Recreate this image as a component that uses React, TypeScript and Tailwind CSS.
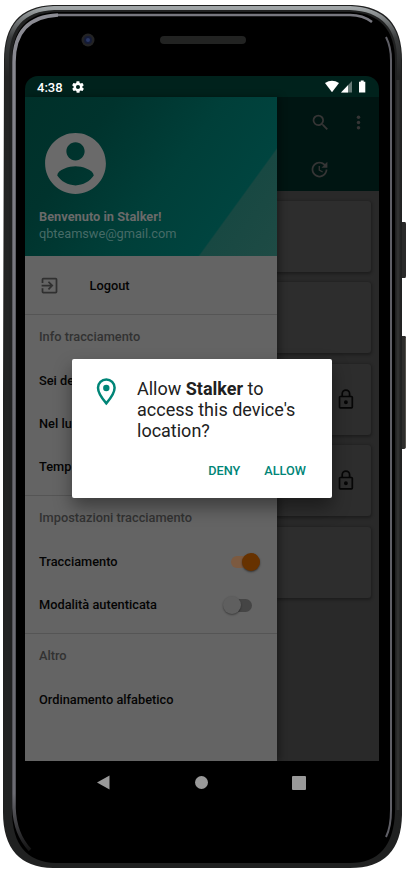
import React from 'react';

function PhoneBody() {
  return (
    <svg className="absolute inset-0" width="409" height="874" viewBox="0 0 409 874" fill="none">
      <defs>
        <linearGradient id="rim" x1="0" y1="0" x2="0" y2="1">
          <stop offset="0" stopColor="#a0a5a7" />
          <stop offset="0.035" stopColor="#3a3c3d" />
          <stop offset="0.08" stopColor="#232424" />
          <stop offset="1" stopColor="#202121" />
        </linearGradient>
        <linearGradient id="edge" gradientUnits="userSpaceOnUse" x1="0" y1="14" x2="0" y2="852">
          <stop offset="0" stopColor="#8c8c94" />
          <stop offset="0.5" stopColor="#6c6c73" />
          <stop offset="0.93" stopColor="#6c6c73" />
          <stop offset="1" stopColor="#111" />
        </linearGradient>
      </defs>
      <path d="M401 222h4q1 0 1 2v52q0 2-1 2h-4z" fill="#2a2a2a" />
      <path d="M401 336h4q1 0 1 2v108q0 3-2 3h-3z" fill="#2e2d2c" />
      <path d="M405.500 338v109" stroke="#55534e" />
      <path d="M53 5H352Q402 7 402 60V815Q401 868 350 868H53Q3 867 3 812V400L4 60Q4 7 53 5Z" fill="#202121" />
      <path d="M54 8H350Q399 10 399 60V814Q397 865 350 865H54Q7 864 7 812V60Q7 10 54 8Z" stroke="url(#rim)" strokeWidth="4" />
      <path d="M56 12H350Q395 14 395 61V812Q393 863 350 863H56Q12 862 12 810V61Q12 14 56 12Z" fill="#000" />
      <path d="M58 15H350Q363 15 372 22" stroke="#77777f" strokeWidth="2.500" />
      <path d="M58 15Q14 17 14 62V808Q15 834 30 850" stroke="url(#edge)" strokeWidth="3.500" />
      <path d="M16.500 62V808Q18 834 34 850L80 840V20H58Q16.500 20 16.500 62Z" fill="#000" />
      <path d="M386 37Q391 47 391 60V810Q391 827 386 837" stroke="#5f5f66" strokeWidth="2" />
      <path d="M398 80V810" stroke="#303131" strokeWidth="3" />
      <circle cx="88" cy="40" r="6.500" fill="#232324" />
      <circle cx="88" cy="40" r="4" fill="#151b35" />
      <circle cx="88" cy="40" r="2" fill="#293765" />
      <rect x="160" y="36" width="86" height="8" rx="4" fill="#222322" />
    </svg>
  );
}

function StatusBar() {
  return (
    <div className="flex h-[21px] items-center bg-[#00221c] pl-3 pr-[13px] text-white">
      <span className="pt-px text-[13px] font-medium leading-none tracking-[0]">4:38</span>
      <svg className="ml-[8px]" width="14" height="14" viewBox="0 0 24 24" fill="currentColor">
        <path d="M19.400 13c0-.3.100-.7.100-1s0-.7-.1-1l2.100-1.700c.2-.1.300-.4.100-.6l-2-3.500c-.1-.2-.4-.3-.6-.2l-2.500 1a7 7 0 0 0-1.700-1l-.4-2.600c0-.2-.2-.4-.5-.4h-4c-.2 0-.5.200-.5.400L9 5a7 7 0 0 0-1.700 1l-2.500-1c-.2-.1-.5 0-.6.200l-2 3.500c-.1.200-.1.500.1.600L4.600 11a8 8 0 0 0 0 2l-2.100 1.700c-.2.100-.3.400-.1.600l2 3.500c.1.200.4.300.6.200l2.500-1c.5.400 1.100.7 1.700 1l.4 2.600c0 .2.200.4.500.4h4c.2 0 .5-.2.500-.4L15 19a7 7 0 0 0 1.700-1l2.500 1c.2.100.5 0 .6-.2l2-3.500c.1-.2.1-.5-.1-.6zM12 15.500a3.500 3.500 0 1 1 0-7 3.500 3.500 0 0 1 0 7z" />
      </svg>
      <svg className="ml-auto" width="41" height="13" viewBox="0 0 41 13" fill="currentColor">
        <path d="M0 3Q7-1.500 14 3L7 12.300Z" />
        <path d="M16 12.500L27 1V12.500Z" opacity=".4" />
        <path d="M16 12.500L23 5.200V12.500Z" />
        <path d="M34 1.800h1.700V.5h3v1.300h1.600v10.700H34z" />
      </svg>
    </div>
  );
}

function Lock() {
  return (
    <svg width="16" height="21" viewBox="0 0 16 21" fill="none" stroke="#060606" strokeWidth="1.700">
      <rect x="1.500" y="7.500" width="12.800" height="11.400" rx="0.800" />
      <path d="M4.200 7.500V4.800a3.700 3.700 0 0 1 7.400 0V7.500" />
      <circle cx="7.900" cy="13.200" r="1.100" fill="#060606" />
    </svg>
  );
}

function Row({ children, muted }: { children: React.ReactNode; muted?: boolean }) {
  return (
    <div className={'flex h-[43px] items-center px-[14px] ' + (muted ? 'pb-[2px] text-[#323232]' : 'text-[#040404]')}>
      {children}
    </div>
  );
}

function Switch({ on }: { on?: boolean }) {
  return on ? (
    <div className="ml-auto mr-[3px] flex h-3 w-[29px] items-center justify-end rounded-full bg-[#7c5a40]">
      <span className="h-[18px] w-[18px] shrink-0 rounded-full bg-[#673200] shadow-[0_1px_2px_rgba(0,0,0,.5)]" />
    </div>
  ) : (
    <div className="ml-auto mr-[11px] flex h-[13px] w-[28px] items-center rounded-full bg-[#454545]">
      <span className="-ml-px h-[18px] w-[18px] shrink-0 rounded-full bg-[#5f5f5f] shadow-[0_1px_2px_rgba(0,0,0,.4)]" />
    </div>
  );
}

function Drawer() {
  return (
    <div className="z-10 w-[252px] shrink-0 bg-[#646464] shadow-[3px_0_7px_rgba(0,0,0,.35)]">
      <div className="h-[159px] bg-[linear-gradient(126deg,#003029_0%,#00332d_25%,#003f39_55%,#00443f_78.500%,#184842_79%,#1e4b45_100%)] px-[14px] pt-[30px]">
        <svg width="73" height="73" viewBox="0 0 24 24" fill="#6a6a6a">
          <path d="M12 2C6.480 2 2 6.480 2 12s4.480 10 10 10 10-4.480 10-10S17.520 2 12 2zm0 3c1.660 0 3 1.340 3 3s-1.340 3-3 3-3-1.340-3-3 1.340-3 3-3zm0 14.200c-2.500 0-4.710-1.280-6-3.220.03-1.990 4-3.080 6-3.080 1.990 0 5.970 1.090 6 3.080-1.290 1.940-3.500 3.220-6 3.220z" />
        </svg>
        <div className="mt-[8px] text-[12.800px] font-bold leading-[17px] text-[#6a6a6a]">Benvenuto in Stalker!</div>
        <div className="text-[12.800px] font-normal leading-[17px] tracking-[-0.05px] text-[#466b67]">qbteamswe@gmail.com</div>
      </div>
      <div className="border-b border-[#555] py-[7.500px]">
        <Row>
          <svg className="mr-[29.500px]" width="21" height="21" viewBox="0 0 24 24" fill="#303030">
            <path d="M10.090 15.590L11.500 17l5-5-5-5-1.410 1.410L12.670 11H3v2h9.670l-2.580 2.590zM19 3H5a2 2 0 0 0-2 2v4h2V5h14v14H5v-4H3v4a2 2 0 0 0 2 2h14a2 2 0 0 0 2-2V5a2 2 0 0 0-2-2z" />
          </svg>
          <span className="pt-px">Logout</span>
        </Row>
      </div>
      <div className="border-b border-[#555] pb-[6.500px] pt-[1.500px]">
        <Row muted>Info tracciamento</Row>
        <Row>Sei de</Row>
        <Row>Nel lu</Row>
        <Row>Temp</Row>
      </div>
      <div className="border-b border-[#555] pb-[6.500px] pt-[1.500px]">
        <Row muted>Impostazioni tracciamento</Row>
        <Row>Tracciamento<Switch on /></Row>
        <Row>Modalità autenticata<Switch /></Row>
      </div>
      <div className="pt-px">
        <Row muted>Altro</Row>
        <Row>Ordinamento alfabetico</Row>
      </div>
    </div>
  );
}

function Places() {
  const cards = [false, false, true, true, false];
  return (
    <div className="flex min-w-0 flex-1 flex-col bg-[#292929]">
      <div className="h-[94px] bg-[#001512] pl-[33px]">
        <div className="flex h-[51px] items-center">
          <svg width="21" height="21" viewBox="0 0 24 24" fill="#353535">
            <path d="M15.500 14h-.79l-.28-.27A6.471 6.471 0 0 0 16 9.500 6.500 6.500 0 1 0 9.500 16c1.610 0 3.090-.59 4.230-1.570l.27.280v.79l5 4.990L20.490 19l-4.990-5zm-6 0C7.010 14 5 11.990 5 9.500S7.010 5 9.500 5 14 7.010 14 9.500 11.990 14 9.500 14z" />
          </svg>
          <svg className="ml-[17px]" width="21" height="21" viewBox="0 0 24 24" fill="#353535">
            <circle cx="12" cy="6" r="2" /><circle cx="12" cy="12" r="2" /><circle cx="12" cy="18" r="2" />
          </svg>
        </div>
        <div className="flex h-[43px] items-center">
          <svg className="-ml-px" width="21" height="21" viewBox="0 0 24 24" fill="#353535">
            <path d="M21 10.120h-6.780l2.740-2.820c-2.730-2.700-7.150-2.800-9.880-.1-2.730 2.710-2.730 7.080 0 9.790s7.150 2.710 9.880 0C18.320 15.650 19 14.080 19 12.100h2c0 1.980-.88 4.550-2.640 6.290-3.510 3.480-9.210 3.480-12.720 0-3.500-3.470-3.530-9.110-.02-12.580s9.140-3.470 12.650 0L21 3v7.120zM12.500 8v4.250l3.500 2.080-.72 1.210L11 13V8h1.500z" />
          </svg>
        </div>
      </div>
      <div className="flex flex-col gap-[10.400px] pr-2 pt-[10px]">
        {cards.map((locked, i) => (
          <div key={i} className="flex h-[71px] items-center justify-end rounded-r-[3px] bg-[#2d2d2d] pr-[17px] shadow-[0_1px_3px_1px_rgba(0,0,0,.3)]">
            {locked && <Lock />}
          </div>
        ))}
      </div>
    </div>
  );
}

function PermissionDialog() {
  return (
    <div className="absolute left-[72px] top-[359px] z-20 h-[139px] w-[259.500px] rounded-[2px] bg-white pt-[19px] shadow-[0_9px_18px_rgba(0,0,0,.4)]">
      <div className="flex pl-[24px]">
        <svg className="mt-0" width="21" height="28" viewBox="0 0 21 28" fill="none">
          <path d="M10.300 1.500A8.300 8.300 0 0 0 2 9.800C2 16 10.300 25.300 10.300 25.300S18.600 16 18.600 9.800A8.300 8.300 0 0 0 10.300 1.500Z" stroke="#008577" strokeWidth="2.500" />
          <circle cx="10.300" cy="10" r="3.200" fill="#008577" />
        </svg>
        <p className="ml-[20px] text-[18px] font-normal leading-[21px] text-[#212121]">
          Allow <b>Stalker</b> to<br />access this device's<br />location?
        </p>
      </div>
      <div className="mt-[21px] flex justify-end gap-[24px] pr-[25.500px] text-[12.700px] font-medium leading-[18px] text-[#008577]">
        <button>DENY</button>
        <button>ALLOW</button>
      </div>
    </div>
  );
}

export default function App() {
  return (
    <div className="relative h-[874px] w-[409px] overflow-hidden bg-white pl-[25px] pt-[76px] font-['Roboto',sans-serif] text-[12.800px] font-medium">
      <PhoneBody />
      <div className="relative flex h-[685px] w-[354px] flex-col overflow-hidden rounded-t-[13px]">
        <StatusBar />
        <div className="flex min-h-0 flex-1">
          <Drawer />
          <Places />
        </div>
      </div>
      <div className="relative flex h-[43px] items-center pl-[71px]">
        <svg width="14" height="15" viewBox="0 0 14 15"><path d="M1 7.500L13.500.5V14.500Z" fill="#999" /></svg>
        <span className="ml-[85px] h-[13px] w-[13px] rounded-full bg-[#999]" />
        <span className="ml-[84px] h-[14px] w-[14px] rounded-[1px] bg-[#999]" />
      </div>
      <PermissionDialog />
    </div>
  );
}
